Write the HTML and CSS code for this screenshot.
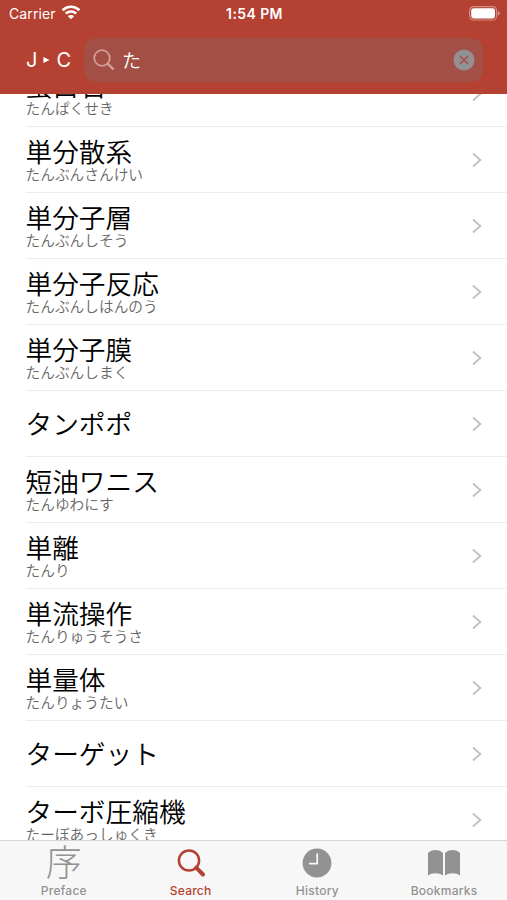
FILE: index.html
```html
<!DOCTYPE html>
<html lang="ja">
<head>
    <meta charset="UTF-8">
    <meta name="viewport" content="width=device-width, initial-scale=1.0">
    <title>Search</title>
    <link rel="stylesheet" href="styles.css">
</head>
<body>

<svg class="sprite" width="0" height="0">
    <symbol id="chevron" viewBox="0 0 12 16">
        <path d="M2 1.5 L9.3 8 L2 14.5" fill="none" stroke="#c2c2c5" stroke-width="2"/>
    </symbol>
</svg>

<div class="app">
    <header class="header">
        <div class="status-bar">
            <div class="carrier">
                <span>Carrier</span>
                <svg class="wifi" width="20" height="15" viewBox="0 0 20 15">
                    <path d="M1.6 5.2 A12 12 0 0 1 18.4 5.2" fill="none" stroke="#fff" stroke-width="2.7"/>
                    <path d="M4.8 8.5 A7.5 7.5 0 0 1 15.2 8.5" fill="none" stroke="#fff" stroke-width="2.5"/>
                    <path d="M10 14.3 L6.8 11.2 A4.6 4.6 0 0 1 13.2 11.2 Z" fill="#fff"/>
                </svg>
            </div>
            <div class="time">1:54 PM</div>
            <svg class="battery" width="31" height="15" viewBox="0 0 31 15">
                <rect x="0.6" y="0.6" width="27" height="13.4" rx="4" fill="none" stroke="#fff" stroke-opacity="0.4" stroke-width="1.2"/>
                <rect x="2.2" y="2.2" width="23.8" height="10.2" rx="2.4" fill="#fff"/>
                <path d="M29 5 Q30.6 5.7 30.6 7.3 Q30.6 8.9 29 9.6 Z" fill="#fff" fill-opacity="0.5"/>
            </svg>
        </div>
        <div class="search-row">
            <div class="direction">
                <span>J</span>
                <svg width="7" height="6" viewBox="0 0 7 6"><path d="M0.4 0 L6.6 3 L0.4 6 Z" fill="#fff"/></svg>
                <span>C</span>
            </div>
            <div class="search-field">
                <svg width="22" height="22" viewBox="0 0 22 22" fill="none" stroke="#d5a19b" stroke-width="1.7">
                    <circle cx="9" cy="9" r="7.8"/>
                    <path d="M14.6 14.6 L20.6 20.4" stroke-width="2.2"/>
                </svg>
                <span class="query">た</span>
                <svg class="clear" width="22" height="22" viewBox="0 0 22 22">
                    <circle cx="11" cy="11" r="10.5" fill="#929093"/>
                    <path d="M7 7 L15 15 M15 7 L7 15" stroke="#a44f46" stroke-width="1.7"/>
                </svg>
            </div>
        </div>
    </header>

    <main class="list">
        <div class="row"><div class="word"><b>蛋白石</b><small>たんぱくせき</small></div><svg class="chevron"><use href="#chevron"/></svg></div>
        <div class="row"><div class="word"><b>単分散系</b><small>たんぶんさんけい</small></div><svg class="chevron"><use href="#chevron"/></svg></div>
        <div class="row"><div class="word"><b>単分子層</b><small>たんぶんしそう</small></div><svg class="chevron"><use href="#chevron"/></svg></div>
        <div class="row"><div class="word"><b>単分子反応</b><small>たんぶんしはんのう</small></div><svg class="chevron"><use href="#chevron"/></svg></div>
        <div class="row"><div class="word"><b>単分子膜</b><small>たんぶんしまく</small></div><svg class="chevron"><use href="#chevron"/></svg></div>
        <div class="row"><div class="word"><b>タンポポ</b></div><svg class="chevron"><use href="#chevron"/></svg></div>
        <div class="row"><div class="word"><b>短油ワニス</b><small>たんゆわにす</small></div><svg class="chevron"><use href="#chevron"/></svg></div>
        <div class="row"><div class="word"><b>単離</b><small>たんり</small></div><svg class="chevron"><use href="#chevron"/></svg></div>
        <div class="row"><div class="word"><b>単流操作</b><small>たんりゅうそうさ</small></div><svg class="chevron"><use href="#chevron"/></svg></div>
        <div class="row"><div class="word"><b>単量体</b><small>たんりょうたい</small></div><svg class="chevron"><use href="#chevron"/></svg></div>
        <div class="row"><div class="word"><b>ターゲット</b></div><svg class="chevron"><use href="#chevron"/></svg></div>
        <div class="row"><div class="word"><b>ターボ圧縮機</b><small>たーぼあっしゅくき</small></div><svg class="chevron"><use href="#chevron"/></svg></div>
    </main>

    <nav class="tab-bar">
        <div class="tab">
            <div class="tab-icon kanji">序</div>
            <span>Preface</span>
        </div>
        <div class="tab active">
            <div class="tab-icon">
                <svg width="30" height="30" viewBox="0 0 30 30" fill="none" stroke="#b44132">
                    <circle cx="13" cy="12.5" r="10.1" stroke-width="2.5"/>
                    <path d="M20.2 19.7 L27 26.5" stroke-width="4" stroke-linecap="round"/>
                </svg>
            </div>
            <span>Search</span>
        </div>
        <div class="tab">
            <div class="tab-icon">
                <svg width="30" height="30" viewBox="0 0 30 30">
                    <circle cx="15" cy="15" r="14.4" fill="#929292"/>
                    <path d="M15.2 5.5 V15.7 H7" fill="none" stroke="#f7f7f7" stroke-width="1.8"/>
                </svg>
            </div>
            <span>History</span>
        </div>
        <div class="tab">
            <div class="tab-icon">
                <svg width="34" height="30" viewBox="0 0 34 30" fill="#929292">
                    <path d="M1 5 Q4 2 8.5 2 Q13 2 16 5 V27.5 Q13 25.3 8.5 25.3 Q4 25.3 1 27.5 Z"/>
                    <path d="M18 5 Q21 2 25.5 2 Q30 2 33 5 V27.5 Q30 25.3 25.5 25.3 Q21 25.3 18 27.5 Z"/>
                </svg>
            </div>
            <span>Bookmarks</span>
        </div>
    </nav>
</div>

</body>
</html>
```
FILE: styles.css
```css
* {
    box-sizing: border-box;
}

body {
    margin: 0;
    font-family: Inter, "Noto Sans CJK JP", sans-serif;
    background: #fff;
}

.sprite {
    display: block;
}

.app {
    display: flex;
    flex-direction: column;
    height: 900px;
    overflow: hidden;
}

/* Header */
.header {
    flex: none;
    height: 93.5px;
    background: #b44132;
    color: #fff;
}

.status-bar {
    display: grid;
    grid-template-columns: 1fr auto 1fr;
    align-items: center;
    height: 27px;
    padding: 0 7px 0 9px;
    font-size: 14px;
}

.carrier {
    display: flex;
    align-items: center;
    gap: 5px;
    letter-spacing: 0.1px;
}

.wifi {
    margin-top: -2px;
}

.time {
    font-weight: 600;
    font-size: 14px;
    letter-spacing: 0.4px;
}

.battery {
    justify-self: end;
}

.search-row {
    display: flex;
    align-items: center;
    height: 66px;
    padding: 0 24px 0 26px;
}

.direction {
    display: flex;
    align-items: center;
    justify-content: space-between;
    width: 45px;
    font-size: 20px;
}

.search-field {
    display: flex;
    align-items: center;
    flex: 1;
    height: 44px;
    margin-left: 13px;
    padding: 0 8px 0 9px;
    border-radius: 12px;
    background: #a44f46;
}

.query {
    margin: -2px 0 0 7px;
    font-size: 19px;
    font-weight: 350;
}

.clear {
    margin-left: auto;
}

/* Results */
.list {
    flex: 1;
    min-height: 0;
    overflow: hidden;
}

.row {
    display: flex;
    align-items: center;
    justify-content: space-between;
    height: 66px;
    margin-left: 26px;
    padding-right: 24px;
    border-bottom: 1.5px solid #ececed;
}

.row:first-child {
    margin-top: -32.5px;
}

.word {
    margin-left: -0.5px;
}

.word b {
    display: block;
    font-size: 26.7px;
    line-height: 30px;
    font-weight: 350;
    color: #000;
}

.word small {
    display: block;
    padding-top: 1px;
    font-size: 14.7px;
    line-height: 15px;
    font-weight: 350;
    color: #666;
}

.chevron {
    width: 12px;
    height: 16px;
}

/* Tabs */
.tab-bar {
    display: grid;
    grid-template-columns: repeat(4, 1fr);
    flex: none;
    height: 60px;
    border-top: 1px solid #d4d4d4;
    background: #f7f7f7;
}

.tab {
    display: flex;
    flex-direction: column;
    align-items: center;
    padding-left: 1px;
    color: #929292;
    font-size: 12px;
    font-weight: 500;
    letter-spacing: 0.25px;
}

.tab-icon {
    display: flex;
    align-items: center;
    justify-content: center;
    height: 34px;
    margin: 5px 0 3px;
}

.tab span {
    line-height: 16px;
}

.kanji {
    font-size: 36px;
    font-weight: 300;
    line-height: 34px;
}

.active {
    color: #b44132;
}
```
